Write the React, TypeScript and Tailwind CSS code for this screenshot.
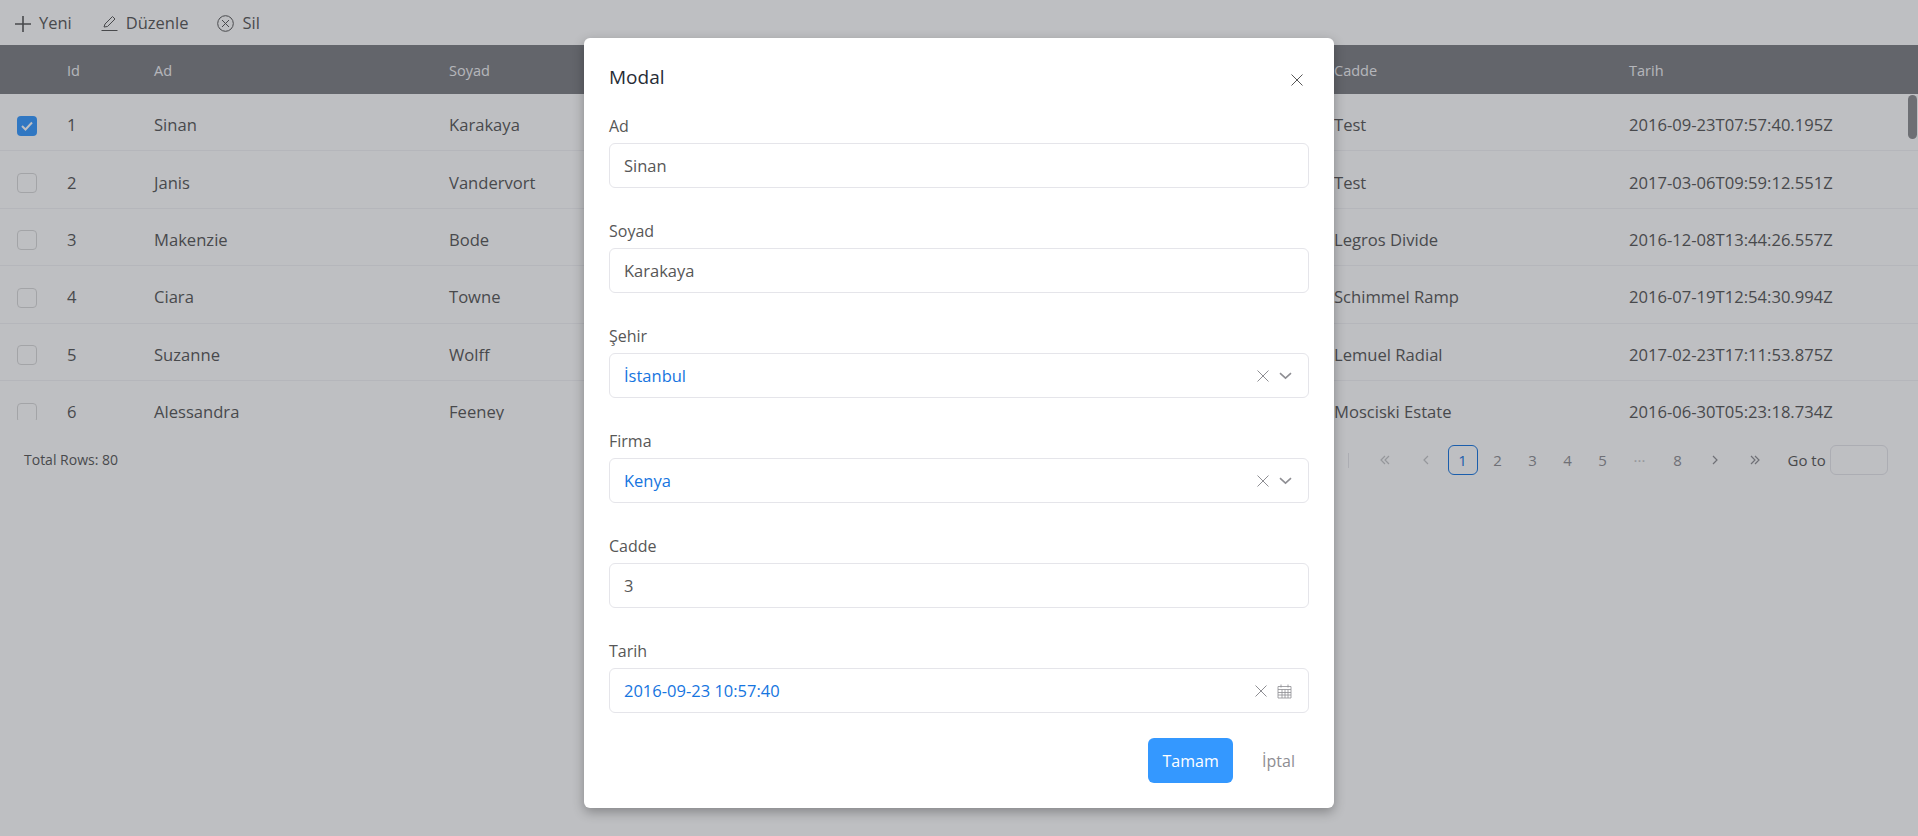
import type { ReactNode } from "react";

const rows = [
  { id: 1, ad: "Sinan", soyad: "Karakaya", cadde: "Test", tarih: "2016-09-23T07:57:40.195Z" },
  { id: 2, ad: "Janis", soyad: "Vandervort", cadde: "Test", tarih: "2017-03-06T09:59:12.551Z" },
  { id: 3, ad: "Makenzie", soyad: "Bode", cadde: "Legros Divide", tarih: "2016-12-08T13:44:26.557Z" },
  { id: 4, ad: "Ciara", soyad: "Towne", cadde: "Schimmel Ramp", tarih: "2016-07-19T12:54:30.994Z" },
  { id: 5, ad: "Suzanne", soyad: "Wolff", cadde: "Lemuel Radial", tarih: "2017-02-23T17:11:53.875Z" },
  { id: 6, ad: "Alessandra", soyad: "Feeney", cadde: "Mosciski Estate", tarih: "2016-06-30T05:23:18.734Z" },
];

const columns = "grid grid-cols-[67px_87px_295px_295px_590px_295px_1fr]";

function CloseIcon({ size = 12 }: { size?: number }) {
  return (
    <svg width={size} height={size} viewBox="0 0 12 12" fill="none" stroke="currentColor" strokeWidth="1">
      <path d="M0.5 0.5 11.5 11.5M11.5 0.5 0.5 11.5" />
    </svg>
  );
}

function Chevron() {
  return (
    <svg width="13" height="8" viewBox="0 0 13 8" fill="none" stroke="#8e8e93" strokeWidth="1.6">
      <path d="M1 1.2 6.5 6.2 12 1.2" />
    </svg>
  );
}

function CalendarIcon() {
  return (
    <svg width="15" height="15" viewBox="0 0 15 15" fill="none" stroke="#8e8e93" strokeWidth="0.8">
      <path d="M1 2.5h13v11.5H1zM1 5.5h13M4 .5v3M11 .5v3M5 5.5v8.5M8 5.5v8.5M11 5.5v8.5M1 8.5h13M1 11h13" />
    </svg>
  );
}

function Pager({ d }: { d: string }) {
  return (
    <svg width="10" height="10" viewBox="0 0 10 10" fill="none" stroke="currentColor" strokeWidth="1.2">
      <path d={d} />
    </svg>
  );
}

function Field({ label, children }: { label: string; children: ReactNode }) {
  return (
    <div>
      <div className="mb-1 h-6 text-base leading-[23px] text-[#575757]">{label}</div>
      <div className="flex h-[45px] items-center rounded-md border border-[#e5e5ea] pl-[14px] pr-4 pt-px text-[16.5px] text-[#575757]">
        {children}
      </div>
    </div>
  );
}

function PickerValue({ value, calendar }: { value: string; calendar?: boolean }) {
  return (
    <>
      <span className="flex-1 text-[#1675e0]">{value}</span>
      <span className="mr-[10px] text-[#8e8e93]">
        <CloseIcon />
      </span>
      {calendar ? <CalendarIcon /> : <Chevron />}
    </>
  );
}

export default function App() {
  return (
    <div className="relative h-[836px] w-full overflow-hidden bg-white font-['Open_Sans',sans-serif] text-[#575757]">
      {/* Toolbar */}
      <div className="flex h-[45px] items-center pl-[15px] pt-[2px] text-[16.5px] text-[#575757]">
        <button className="flex items-center gap-2">
          <svg width="16" height="16" viewBox="0 0 16 16" fill="none" stroke="currentColor" strokeWidth="1.6">
            <path d="M8 0v16M0 8h16" />
          </svg>
          Yeni
        </button>
        <button className="ml-[29px] flex items-center gap-2">
          <svg width="17" height="17" viewBox="0 0 17 17" fill="none" stroke="currentColor" strokeWidth="1">
            <path d="M3 12 4 9 11.5 1.5 14 4 6.5 11.5zM0.5 15.5h16" />
          </svg>
          Düzenle
        </button>
        <button className="ml-[29px] flex items-center gap-2">
          <svg width="17" height="17" viewBox="0 0 17 17" fill="none" stroke="currentColor" strokeWidth="1">
            <circle cx="8.5" cy="8.5" r="7.8" />
            <path d="M5 5 12 12M12 5 5 12" />
          </svg>
          Sil
        </button>
      </div>

      {/* Table */}
      <div className={`${columns} h-[49px] items-center bg-[#7d7f83] pt-[2px] text-[14.5px] text-[#f2f2f5]`}>
        <span />
        <span>Id</span>
        <span>Ad</span>
        <span>Soyad</span>
        <span />
        <span>Cadde</span>
        <span>Tarih</span>
      </div>
      <div className="relative h-[326px] overflow-hidden">
        {rows.map((row) => (
          <div key={row.id} className={`${columns} h-[57.4px] items-center border-b border-[#f2f2f5] pt-[7px] text-[16.6px]`}>
            <span className="pl-[17px]">
              {row.id === 1 ? (
                <span className="flex h-5 w-5 items-center justify-center rounded-[4px] bg-[#3498ff]">
                  <svg width="12" height="10" viewBox="0 0 12 10" fill="none" stroke="white" strokeWidth="2">
                    <path d="M1 5 4.5 8.5 11 1.5" />
                  </svg>
                </span>
              ) : (
                <span className="block h-5 w-5 rounded-[4px] border border-[#d9d9d9]" />
              )}
            </span>
            <span>{row.id}</span>
            <span>{row.ad}</span>
            <span>{row.soyad}</span>
            <span />
            <span>{row.cadde}</span>
            <span>{row.tarih}</span>
          </div>
        ))}
        <div className="absolute right-px top-px h-11 w-[9px] rounded-full bg-[#8c8d90]" />
      </div>

      {/* Footer */}
      <div className="flex items-start justify-between pl-6 pr-[30px] pt-[25px]">
        <span className="h-[30px] text-sm leading-[30px]">Total Rows: 80</span>
        <div className="flex h-[30px] w-[540px] items-center text-[15px] text-[#8e8e93]">
          <span className="h-[15px] w-px bg-[#e5e5ea]" />
          <span className="ml-[18px] flex w-[35px] justify-center text-[#c5c6c7]">
            <Pager d="M5 1 1 5 5 9M9 1 5 5 9 9" />
          </span>
          <span className="ml-[6px] flex w-[35px] justify-center text-[#c5c6c7]">
            <Pager d="M7 1 3 5 7 9" />
          </span>
          <span className="ml-[4.5px] flex h-[30px] w-[30px] items-center justify-center rounded-md border border-[#1675e0] text-[#1675e0]">1</span>
          {["2", "3", "4", "5"].map((p) => (
            <span key={p} className="ml-[5px] flex h-[30px] w-[30px] items-center justify-center">{p}</span>
          ))}
          <span className="ml-[7px] flex h-[30px] w-[30px] items-center justify-center text-[#c5c6c7]">···</span>
          <span className="ml-2 flex h-[30px] w-[30px] items-center justify-center">8</span>
          <span className="ml-[7px] flex w-[30px] justify-center">
            <Pager d="M3 1 7 5 3 9" />
          </span>
          <span className="ml-[7.5px] flex w-[35px] justify-center">
            <Pager d="M1 1 5 5 1 9M5 1 9 5 5 9" />
          </span>
          <span className="ml-[15.5px] text-[#575757]">Go to</span>
          <span className="ml-auto h-[30px] w-[58px] rounded-md border border-[#e5e5ea]" />
        </div>
      </div>

      {/* Backdrop */}
      <div className="absolute inset-0 bg-[rgba(39,44,54,0.3)]" />

      {/* Modal */}
      <div className="absolute left-[584px] top-[38px] w-[750px] rounded-md bg-white pb-[25px] pl-[25px] pr-[25px] pt-5 shadow-[0_4px_12px_rgba(0,0,0,0.3)]">
        <div className="mb-[19px] flex h-[38px] items-center justify-between">
          <span className="text-[19px] text-[#272c36]">Modal</span>
          <span className="mr-[6px] mt-[6px] text-[#575757]">
            <CloseIcon size={12} />
          </span>
        </div>
        <div className="flex flex-col gap-8">
          <Field label="Ad">Sinan</Field>
          <Field label="Soyad">Karakaya</Field>
          <Field label="Şehir">
            <PickerValue value="İstanbul" />
          </Field>
          <Field label="Firma">
            <PickerValue value="Kenya" />
          </Field>
          <Field label="Cadde">3</Field>
          <Field label="Tarih">
            <PickerValue value="2016-09-23 10:57:40" calendar />
          </Field>
        </div>
        <div className="mt-[25px] flex items-center justify-end text-base">
          <button className="h-[45px] w-[85px] rounded-md bg-[#3498ff] text-white">Tamam</button>
          <button className="ml-[29px] mr-[14px] text-[#8e8e93]">İptal</button>
        </div>
      </div>
    </div>
  );
}
